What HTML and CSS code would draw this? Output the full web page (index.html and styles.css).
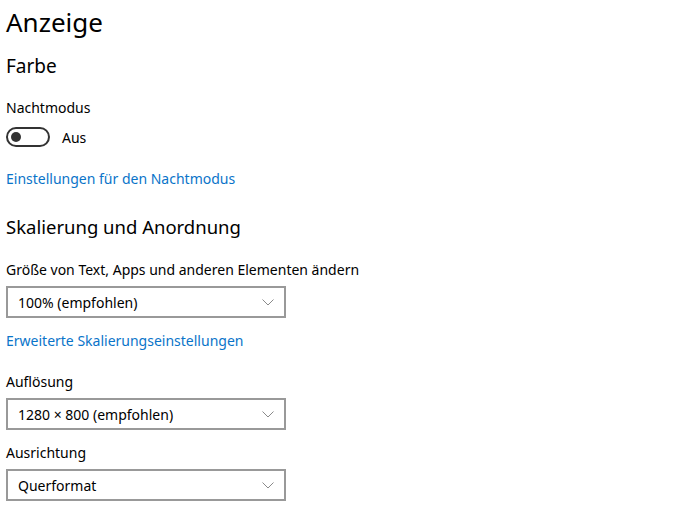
FILE: index.html
```html
<!DOCTYPE html>
<html lang="de">
<head>
  <meta charset="UTF-8" />
  <title>Anzeige</title>
  <link rel="stylesheet" href="styles.css">
</head>
<body>
  <h1 class="page-title">Anzeige</h1>

  <h2 class="section-title">Farbe</h2>
  <div class="label label-night">Nachtmodus</div>
  <div class="toggle-row">
    <span class="toggle"><span class="knob"></span></span>
    <span class="toggle-text">Aus</span>
  </div>
  <a class="link link-night" href="#">Einstellungen für den Nachtmodus</a>

  <h2 class="section-title section-scale">Skalierung und Anordnung</h2>
  <div class="label label-size">Größe von Text, Apps und anderen Elementen ändern</div>
  <div class="dropdown">
    <span>100% (empfohlen)</span>
    <svg class="chevron" width="12" height="7" viewBox="0 0 12 7"><path d="M0.5 0.5 L6 6 L11.5 0.5" fill="none" stroke="#8a8a8a" stroke-width="1"/></svg>
  </div>
  <a class="link link-scale" href="#">Erweiterte Skalierungseinstellungen</a>

  <div class="label label-res">Auflösung</div>
  <div class="dropdown">
    <span>1280 × 800 (empfohlen)</span>
    <svg class="chevron" width="12" height="7" viewBox="0 0 12 7"><path d="M0.5 0.5 L6 6 L11.5 0.5" fill="none" stroke="#8a8a8a" stroke-width="1"/></svg>
  </div>

  <div class="label label-orient">Ausrichtung</div>
  <div class="dropdown">
    <span>Querformat</span>
    <svg class="chevron" width="12" height="7" viewBox="0 0 12 7"><path d="M0.5 0.5 L6 6 L11.5 0.5" fill="none" stroke="#8a8a8a" stroke-width="1"/></svg>
  </div>
</body>
</html>
```

FILE: styles.css
```css
body {
  margin: 0;
  padding: 0 6px;
  font-family: "Noto Sans", "Open Sans", sans-serif;
  font-size: 14px;
  color: #000;
  background: #fff;
}
.page-title {
  margin: 4px 0 0;
  font-size: 26px;
  font-weight: normal;
  line-height: 36px;
}
.section-title {
  margin: 13px 0 0;
  font-size: 19px;
  font-weight: normal;
  line-height: 26px;
}
.section-scale {
  margin-top: 25px;
  font-size: 18.5px;
}
.label {
  line-height: 20px;
}
.label-night {
  margin-top: 19px;
}
.label-size {
  margin-top: 20px;
}
.label-res {
  margin-top: 21px;
}
.label-orient {
  margin-top: 13px;
}
.toggle-row {
  display: flex;
  align-items: center;
  gap: 12px;
  margin-top: 9px;
}
.toggle {
  display: flex;
  align-items: center;
  box-sizing: border-box;
  width: 44px;
  height: 20px;
  border: 2px solid #333;
  border-radius: 10px;
  padding-left: 3px;
}
.knob {
  width: 10px;
  height: 10px;
  border-radius: 50%;
  background: #333;
}
.link {
  display: block;
  color: #0a74c9;
  text-decoration: none;
  line-height: 20px;
}
.link-night {
  margin-top: 22px;
}
.link-scale {
  margin-top: 13px;
}
.dropdown {
  display: flex;
  align-items: center;
  justify-content: space-between;
  box-sizing: border-box;
  width: 280px;
  height: 32px;
  margin-top: 6px;
  padding: 0 10px;
  border: 2px solid #999;
}
.chevron {
  margin-top: 1px;
}
```
